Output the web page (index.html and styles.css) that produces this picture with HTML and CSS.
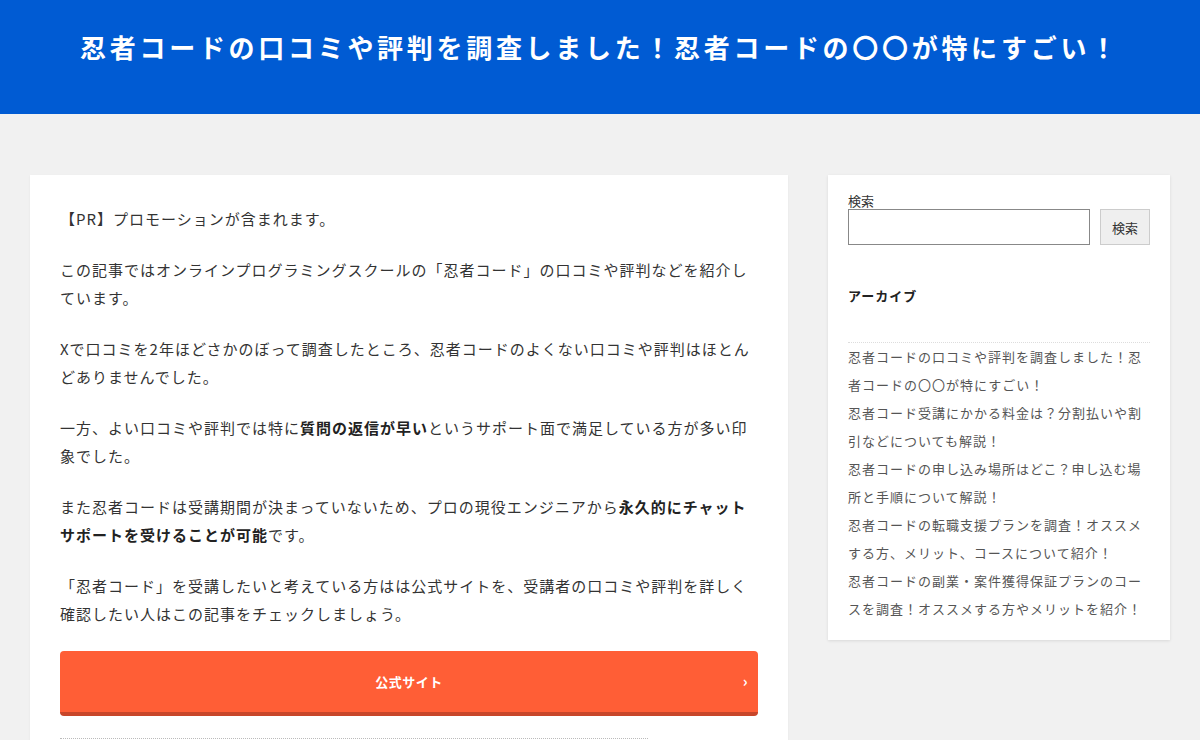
FILE: index.html
```html
<!DOCTYPE html>
<html lang="ja">
  <head>
    <meta charset="utf-8" />
    <link rel="stylesheet" href="styles.css">
  </head>
  <body>
    <header class="site-header">
      <h1 class="site-title">忍者コードの口コミや評判を調査しました！忍者コードの〇〇が特にすごい！</h1>
    </header>

    <div class="wrap">
      <!-- 記事本文 -->
      <main class="article">
        <p>【PR】プロモーションが含まれます。</p>
        <p>この記事ではオンラインプログラミングスクールの「忍者コード」の口コミや評判などを紹介しています。</p>
        <p>Xで口コミを2年ほどさかのぼって調査したところ、忍者コードのよくない口コミや評判はほとんどありませんでした。</p>
        <p>一方、よい口コミや評判では特に<strong>質問の返信が早い</strong>というサポート面で満足している方が多い印象でした。</p>
        <p>また忍者コードは受講期間が決まっていないため、プロの現役エンジニアから<strong>永久的にチャットサポートを受けることが可能</strong>です。</p>
        <p>「忍者コード」を受講したいと考えている方はは公式サイトを、受講者の口コミや評判を詳しく確認したい人はこの記事をチェックしましょう。</p>
        <a class="cta" href="#">公式サイト<span class="cta-arrow">›</span></a>
        <div class="toc"></div>
      </main>

      <!-- サイドバー -->
      <aside class="sidebar">
        <form class="search">
          <label for="s" class="search-label">検索</label>
          <div class="search-row">
            <input type="text" id="s" class="search-input" />
            <button type="button" class="search-btn">検索</button>
          </div>
        </form>

        <h2 class="widget-title">アーカイブ</h2>
        <ul class="archive">
          <li><a href="#">忍者コードの口コミや評判を調査しました！忍者コードの〇〇が特にすごい！</a></li>
          <li><a href="#">忍者コード受講にかかる料金は？分割払いや割引などについても解説！</a></li>
          <li><a href="#">忍者コードの申し込み場所はどこ？申し込む場所と手順について解説！</a></li>
          <li><a href="#">忍者コードの転職支援プランを調査！オススメする方、メリット、コースについて紹介！</a></li>
          <li><a href="#">忍者コードの副業・案件獲得保証プランのコースを調査！オススメする方やメリットを紹介！</a></li>
        </ul>
      </aside>
    </div>
  </body>
</html>
```

FILE: styles.css
```css
body {
  margin: 0;
  background: #f1f1f1;
  color: #333;
  font-family: "Noto Sans CJK JP", "Noto Sans", sans-serif;
  font-size: 15px;
}

.site-header {
  background: #005bd3;
  height: 114px;
  box-sizing: border-box;
  padding-top: 29px;
}

.site-title {
  margin: 0;
  color: #fff;
  text-align: center;
  font-size: 26px;
  line-height: 36px;
  font-weight: bold;
  letter-spacing: 3.7px;
}

.wrap {
  width: 1140px;
  margin: 61px auto 0;
  display: flex;
  align-items: flex-start;
  gap: 40px;
}

/* 記事 */
.article {
  width: 758px;
  box-sizing: border-box;
  background: #fff;
  padding: 30px 30px 0;
  box-shadow: 0 1px 2px rgba(0, 0, 0, 0.06);
}

.article p {
  margin: 0 0 22px;
  line-height: 28.5px;
  letter-spacing: 1px;
}

.article strong {
  font-weight: bold;
  color: #222;
}

.cta {
  display: block;
  position: relative;
  height: 61px;
  line-height: 61px;
  background: #ff5e36;
  border-bottom: 4px solid #c8462a;
  border-radius: 4px;
  color: #fff;
  text-align: center;
  text-decoration: none;
  font-size: 13px;
  font-weight: bold;
  letter-spacing: 0.5px;
}

.cta-arrow {
  position: absolute;
  right: 10px;
  top: -1px;
  font-size: 15px;
  font-weight: bold;
}

.toc {
  margin-top: 22px;
  width: 588px;
  height: 10px;
  border-top: 1px dotted #bbb;
}

/* サイドバー */
.sidebar {
  width: 342px;
  box-sizing: border-box;
  background: #fff;
  padding: 18px 20px 17px;
  box-shadow: 0 1px 3px rgba(0, 0, 0, 0.1);
}

.search-label {
  display: block;
  font-size: 13px;
  line-height: 16px;
  color: #333;
}

.search-row {
  display: flex;
  gap: 10px;
}

.search-input {
  width: 242px;
  height: 36px;
  box-sizing: border-box;
  border: 1px solid #888;
  margin: 0;
}

.search-btn {
  width: 50px;
  height: 36px;
  margin-left: auto;
  background: #efefef;
  border: 1px solid #ccc;
  color: #333;
  font-family: inherit;
  font-size: 13px;
  padding: 0;
}

.widget-title {
  margin: 41px 0 0;
  padding-bottom: 36px;
  font-size: 13px;
  line-height: 20px;
  font-weight: bold;
  color: #222;
  letter-spacing: 1px;
  border-bottom: 1px dotted #ddd;
}

.archive {
  list-style: none;
  margin: 0;
  padding: 0;
}

.archive li {
  font-size: 13px;
  line-height: 28px;
  letter-spacing: 1px;
}

.archive a {
  color: #555;
  text-decoration: none;
}
```
